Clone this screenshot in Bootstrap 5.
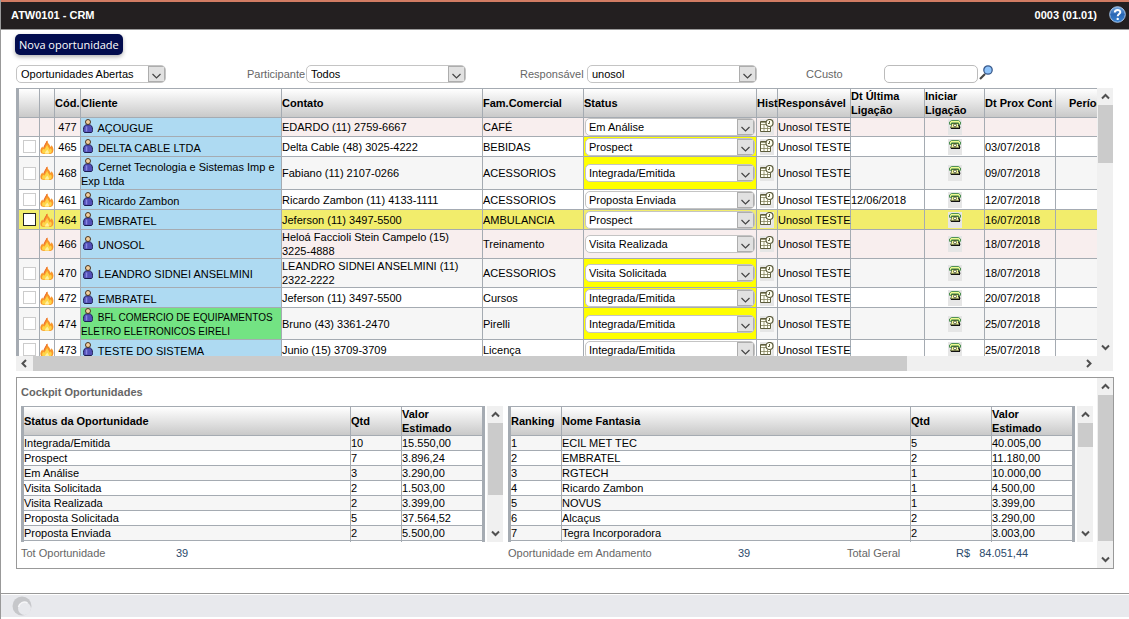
<!DOCTYPE html>
<html lang="pt-BR">
<head>
<meta charset="utf-8">
<meta name="viewport" content="width=device-width, initial-scale=1">
<title>ATW0101 - CRM</title>
<link href="https://cdn.jsdelivr.net/npm/bootstrap@5.3.0/dist/css/bootstrap.min.css" rel="stylesheet">
<style>
:root { --line: #a5abb2; --sky: #aedaf2; }
body { font: 11px/14px "Liberation Sans", Arial, sans-serif; color: #000; background: #fff; border-left: 1px solid #999; }
svg { display: block; flex: none; }
.topbar { height: 30px; background: #231f20; border-top: 2px solid #d27c63; border-bottom: 1px solid #999; padding: 0 3px 2px 10px; }
.page-body { padding: 4px 15px 0; }
.btn-new { font: 11px/16px "Open Sans", sans-serif; height: 21px; padding: 2px 4px; margin-left: -1px; color: #fff; background: #020c4e; border: 0; border-radius: 5px; box-shadow: 0 2px 4px rgba(0,0,0,.3); }
.btn-new:hover { color: #fff; background: #111d6b; }
.filters { display: grid; grid-template-columns: 231fr 273fr 286fr 308fr; margin: 10px 0 5px; height: 18px; }
.filters label { color: #666; font-size: 11px; }
.pick { width: 100%; height: 18px; padding: 0 18px 0 4px; font-size: 11px; line-height: 14px; color: #000; border: 1px solid #c4c4c4; border-radius: 5px;
  background: #fff url("data:image/svg+xml,%3Csvg xmlns='http://www.w3.org/2000/svg' width='17' height='16'%3E%3Crect x='.5' y='.5' width='16' height='15' fill='%23e1e1e1' stroke='%23adadad'/%3E%3Cpath d='M4.500 8l4 4 4-4' fill='none' stroke='%23444' stroke-width='1.200'/%3E%3C/svg%3E") no-repeat right 0 top 0; }
.w-status { width: 150px; }
.w-part { width: 160px; }
.w-resp { width: 170px; }
.lb-a { width: 59px; }
.lb-b { width: 67px; }
.lb-c { width: 78px; }
.w-cc { width: 94px; height: 18px; min-height: 0; padding: 0 4px; font-size: 11px; border: 1px solid #bbb; border-radius: 5px; }

/* data grids */
.grid-table { table-layout: fixed; border-collapse: separate; border-spacing: 0; border-top: 1px solid var(--line); border-left: 3px solid var(--line); }
.grid-table th { height: 29px; padding: 0; background: linear-gradient(#fff, #c9c9c9); font-weight: 700; white-space: nowrap; }
.grid-table th.two-line { white-space: normal; }
.grid-table th, .grid-table td { border-right: 1px solid var(--line); border-bottom: 1px solid var(--line); vertical-align: middle; }
.grid-table td { padding: 0; }
.crm { width: 1108px; }
.crm .c-client { background: var(--sky); }
.crm .c-client.won { background: #73e383; font-size: 10px; }
.crm .c-client svg { display: inline-block; vertical-align: -1px; margin: 0 2px; }
.crm .due { background: #ff0; }
.crm td.c-status { padding: 0 1px; }
.c-status .pick { padding-left: 3px; }
.row-odd { background: #f6f6f6; }
.row-late { background: #f8eeee; }
.row-picked { background: #f2ed6c; }
.row-19 { height: 19px; } .row-20 { height: 20px; } .row-29 { height: 29px; } .row-32 { height: 32px; } .row-33 { height: 33px; }
.tick { appearance: none; display: block; width: 13px; height: 13px; margin: 0 0 0 4px; background: #fff; border: 1px solid #ccc; }
.row-picked .tick { border-color: #222; }
.icon-btn { display: block; margin: 0 auto; padding: 0; border: 0; background: #e6e6e6; width: 14px; height: 16px; }
.grid-view { overflow: hidden; min-width: 0; }
.main-view { height: 268px; }
.main-grid { margin-right: 1px; }

/* scroll bars */
.sbar-v { width: 16px; flex: none; background: #f0f0f0; display: flex; flex-direction: column; align-items: center; }
.sbar-h { height: 15px; background: #f0f0f0; display: flex; align-items: center; padding-right: 16px; }
.arrow { flex: none; width: 17px; height: 17px; padding: 4px; }
.sbar-h .arrow { height: 15px; padding: 3px 4px; }
.arrow path { fill: none; stroke: #505050; stroke-width: 2; }
.knob { background: #cbcbcb; width: 15px; }
.sbar-h .knob { height: 15px; width: 83.5%; }
.knob-a { height: 58px; } .knob-b { height: 72px; } .knob-c { height: 24px; } .knob-d { height: 146px; }

.cockpit { border: 1px solid #999; margin-top: 6px; height: 192px; }
.cockpit h2 { font-size: 11px; line-height: 14px; font-weight: 700; color: #666; margin: 7px 0; }
.cockpit-in { padding: 0 4px; }
.halves { display: grid; grid-template-columns: 482fr 585fr; column-gap: 5px; }
.halves > * { min-width: 0; }
.mini { width: 100%; border-right: 2px solid var(--line); }
.mini td { height: 15px; line-height: 14px; }
.mini tbody tr:nth-child(odd) { background: #f6f6f6; }
.mini-view { height: 136px; flex: 1; margin-right: 2px; }
.totals { color: #666; margin-top: 4px; }
.tot-a { display: grid; grid-template-columns: 155fr 327fr; }
.tot-b { display: grid; grid-template-columns: 230fr 109fr 109fr 137fr; }
.totals output { color: #2b4a6b; }
.statusbar { border-top: 1px solid #999; margin-bottom: 2px; height: 24px; background: #e8e9ed; padding-left: 11px; box-shadow: inset 0 1px #fff; }
</style>
</head>
<body class="d-flex flex-column min-vh-100 overflow-hidden">

<svg width="0" height="0" class="position-absolute" aria-hidden="true">
  <symbol id="i-person" viewBox="0 0 10 14">
    <path d="M1.500 13.500C.5 13 .5 12 .5 10.500 .5 7.500 1.800 6 3.500 5.800h3C8.200 6 9.500 7.500 9.500 10.500c0 1.500 0 2.500-1 3z" fill="#5350b8" stroke="#1c1c50"/>
    <path d="M3.500 7.500v5" stroke="#8a88e0" stroke-width="1.500"/>
    <circle cx="5" cy="3" r="2.500" fill="#f3cf9d" stroke="#4a3520"/>
  </symbol>
  <symbol id="i-fire" viewBox="0 0 14 14">
    <path d="M1 13C-.5 10 1 8 2.500 6.500L3 8C4.500 6 5 3 7.500.3 7.300 2 8.500 3.500 9.300 4.500c.6.900 1 1.500 1.200 2.500.8-.5 1-1.200.8-2C13 6.500 14.500 10 12.500 13c-1 1-3 1-5 1s-5 .2-6.500-1z" fill="#f9962a"/>
    <path d="M2.500 13c-.8-1.500-.5-3 .8-4.200l.9 1C5.800 8 6 6.500 7.200 4.800 7.600 7 9.500 8 9.600 9.800c.6-.3 1-.9 1-1.500 1.500 1.500 1.600 3.500.3 4.700-2 1-6.300 1-8.400 0z" fill="#fed548"/>
    <path d="M5 13.500c0-2 1.500-2.500 2.200-4C8.200 11 9 11.500 9 13.500z" fill="#fff0a0"/>
    <path d="M7 1C6.500 3.500 4.500 5 4 7.500" fill="none" stroke="#ea6a35"/>
  </symbol>
  <symbol id="i-hist" viewBox="0 0 14 16">
    <path d="M.5 2.500h11v10H.5z" fill="#fffff4"/>
    <path d="M7 2.500H.5v10h10V8" fill="none" stroke="#5c5c3c"/>
    <path d="M1 3.500h5M1 5.500h5M1 9.500h9M4 5v7M7.500 8v4" fill="none" stroke="#84845e" stroke-width=".8"/>
    <circle cx="9.500" cy="4" r="3.500" fill="#fffff0" stroke="#5c5c3c" stroke-width="1.200"/>
    <path d="M9.500 2v2.500H8" fill="none" stroke="#5c5c3c"/>
  </symbol>
  <symbol id="i-phone" viewBox="0 0 14 16">
    <path d="M3.500 4.500v2l-1 2.500h9.200l-1.200-3V4.500z" fill="#f7f79c" stroke="#3c4c24" stroke-width=".8"/>
    <path d="M3 9.300h9M12 8.800l-1.300-3" stroke="#111" stroke-width="1.200"/>
    <path d="M1.500 5.300V3l2-1.500h7L12.500 3v2.300h-2V3.900h-7v1.400z" fill="#f1fa92" stroke="#2a7a3c" stroke-width=".8"/>
    <circle cx="7" cy="6.400" r="1.500" fill="#fffef0" stroke="#33401c" stroke-width=".8"/>
  </symbol>
</svg>

<header class="topbar d-flex align-items-center fw-bold text-white">
  <span>ATW0101 - CRM</span>
  <span class="ms-auto me-2">0003 (01.01)</span>
  <a href="#" class="ms-1" aria-label="Ajuda"><svg width="17" height="17" viewBox="0 0 17 17">
    <defs><linearGradient id="hg" x2="0" y2="1"><stop stop-color="#77a9e0"/><stop offset=".5" stop-color="#2a67b4"/><stop offset="1" stop-color="#3c86d4"/></linearGradient></defs>
    <circle cx="8.500" cy="8.500" r="7.800" fill="url(#hg)" stroke="#a9c5e8" stroke-width="1"/>
    <path d="M5.800 6.500C5.800 3 11.500 3.200 11.300 6.300 11.200 8 8.700 8.200 8.700 10.300" fill="none" stroke="#fff" stroke-width="2"/><circle cx="8.700" cy="12.900" r="1.200" fill="#fff"/></svg></a>
</header>

<main class="page-body">
  <button type="button" class="btn btn-new d-block">Nova oportunidade</button>

  <form class="filters">
    <div><select class="form-select pick w-status" aria-label="Oportunidades"><option>Oportunidades Abertas</option></select></div>
    <div class="d-flex align-items-center"><label class="lb-a" for="part">Participante</label><select id="part" class="form-select pick w-part"><option>Todos</option></select></div>
    <div class="d-flex align-items-center"><label class="lb-b" for="resp">Responsável</label><select id="resp" class="form-select pick w-resp"><option>unosol</option></select></div>
    <div class="d-flex align-items-center"><label class="lb-c" for="cc">CCusto</label><input id="cc" type="text" class="form-control w-cc">
      <a href="#" aria-label="Buscar"><svg width="16" height="18" viewBox="0 0 16 18"><path d="M2 14l5-5" stroke="#444" stroke-width="2.200"/><circle cx="10" cy="5" r="4.200" fill="#8fc4fb" stroke="#3a5a8c" stroke-width="1.300"/></svg></a></div>
  </form>

  <section class="main-grid">
    <div class="d-flex">
      <div class="grid-view main-view flex-fill">
        <table class="grid-table crm">
          <colgroup id="crmCols"></colgroup>
          <thead><tr>
            <th></th><th></th><th>Cód.</th><th>Cliente</th><th>Contato</th><th>Fam.Comercial</th><th>Status</th><th>Hist</th><th>Responsável</th>
            <th class="two-line">Dt Última Ligação</th><th class="two-line">Iniciar Ligação</th><th>Dt Prox Cont</th><th class="text-center">Período</th>
          </tr></thead>
          <tbody id="crmRows"></tbody>
        </table>
      </div>
      <div class="sbar-v"><svg class="arrow" viewBox="0 0 9 9"><path d="M1 6.500L4.500 3 8 6.500"/></svg><div class="knob knob-a"></div><svg class="arrow mt-auto" viewBox="0 0 9 9"><path d="M1 2.500L4.500 6 8 2.500"/></svg></div>
    </div>
    <div class="sbar-h"><svg class="arrow" viewBox="0 0 9 9"><path d="M6 1L2.500 4.500 6 8"/></svg><div class="flex-fill"><div class="knob"></div></div><svg class="arrow" viewBox="0 0 9 9"><path d="M3 1l3.500 3.500L3 8"/></svg></div>
  </section>

  <section class="cockpit d-flex">
    <div class="cockpit-in flex-fill">
      <h2>Cockpit Oportunidades</h2>
      <div class="halves">
        <div class="d-flex">
          <div class="grid-view mini-view">
            <table class="grid-table mini">
              <colgroup><col><col width="51"><col width="81"></colgroup>
              <thead><tr><th>Status da Oportunidade</th><th>Qtd</th><th>Valor<br>Estimado</th></tr></thead>
              <tbody id="statusRows"></tbody>
            </table>
          </div>
          <div class="sbar-v"><svg class="arrow" viewBox="0 0 9 9"><path d="M1 6.500L4.500 3 8 6.500"/></svg><div class="knob knob-b"></div><svg class="arrow mt-auto" viewBox="0 0 9 9"><path d="M1 2.500L4.500 6 8 2.500"/></svg></div>
        </div>
        <div class="d-flex">
          <div class="grid-view mini-view">
            <table class="grid-table mini">
              <colgroup><col width="51"><col><col width="81"><col width="81"></colgroup>
              <thead><tr><th>Ranking</th><th>Nome Fantasia</th><th>Qtd</th><th>Valor<br>Estimado</th></tr></thead>
              <tbody id="rankRows"></tbody>
            </table>
          </div>
          <div class="sbar-v"><svg class="arrow" viewBox="0 0 9 9"><path d="M1 6.500L4.500 3 8 6.500"/></svg><div class="knob knob-c"></div><svg class="arrow mt-auto" viewBox="0 0 9 9"><path d="M1 2.500L4.500 6 8 2.500"/></svg></div>
        </div>
      </div>
      <div class="halves totals">
        <div class="tot-a"><span>Tot Oportunidade</span><output>39</output></div>
        <div class="tot-b"><span>Oportunidade em Andamento</span><output>39</output><span>Total Geral</span><output>R$&nbsp;&nbsp; 84.051,44</output></div>
      </div>
    </div>
    <div class="sbar-v"><svg class="arrow" viewBox="0 0 9 9"><path d="M1 6.500L4.500 3 8 6.500"/></svg><div class="knob knob-d"></div><svg class="arrow mt-auto" viewBox="0 0 9 9"><path d="M1 2.500L4.500 6 8 2.500"/></svg></div>
  </section>
</main>

<footer class="statusbar mt-auto d-flex align-items-center">
  <svg width="20" height="20" viewBox="0 0 20 20"><circle cx="10" cy="10" r="9.500" fill="#c6c7ca"/><circle cx="12.500" cy="12.500" r="6.500" fill="#e8e9ed"/><path d="M6.500 11a6 6 0 0 1 9-4" fill="none" stroke="#f6f6f8" stroke-width="1.500"/></svg>
</footer>

<script src="https://cdn.jsdelivr.net/npm/bootstrap@5.3.0/dist/js/bootstrap.bundle.min.js"></script>
<script>
const colWidths = [21, 15, 26, 201, 201, 101, 173, 21, 73, 74, 60, 71, 68];
document.getElementById('crmCols').innerHTML = colWidths.map(w => `<col width="${w}">`).join('');

// code, client, contact, phone, family, status, last call, next contact, row classes, flags (t tick, f fire, d due, w won)
const deals = [
  [477, 'AÇOUGUE', 'EDARDO (11)', '2759-6667', 'CAFÉ', 'Em Análise', '', '', 'row-19 row-late', ''],
  [465, 'DELTA CABLE LTDA', 'Delta Cable (48)', '3025-4222', 'BEBIDAS', 'Prospect', '', '03/07/2018', 'row-20', 'tfd'],
  [468, 'Cernet Tecnologia e Sistemas Imp e Exp Ltda', 'Fabiano (11)', '2107-0266', 'ACESSORIOS', 'Integrada/Emitida', '', '09/07/2018', 'row-33 row-odd', 'tfd'],
  [461, 'Ricardo Zambon', 'Ricardo Zambon (11)', '4133-1111', 'ACESSORIOS', 'Proposta Enviada', '12/06/2018', '12/07/2018', 'row-20', 'tf'],
  [464, 'EMBRATEL', 'Jeferson (11)', '3497-5500', 'AMBULANCIA', 'Prospect', '', '16/07/2018', 'row-20 row-picked', 'tf'],
  [466, 'UNOSOL', 'Heloá Faccioli Stein Campelo (15)', '3225-4888', 'Treinamento', 'Visita Realizada', '', '18/07/2018', 'row-29 row-late', 'f'],
  [470, 'LEANDRO SIDNEI ANSELMINI', 'LEANDRO SIDNEI ANSELMINI (11)', '2322-2222', 'ACESSORIOS', 'Visita Solicitada', '', '18/07/2018', 'row-29 row-odd', 'tfd'],
  [472, 'EMBRATEL', 'Jeferson (11)', '3497-5500', 'Cursos', 'Integrada/Emitida', '', '20/07/2018', 'row-20', 'tfd'],
  [474, 'BFL COMERCIO DE EQUIPAMENTOS ELETRO ELETRONICOS EIRELI', 'Bruno (43)', '3361-2470', 'Pirelli', 'Integrada/Emitida', '', '25/07/2018', 'row-32 row-odd', 'tfdw'],
  [473, 'TESTE DO SISTEMA', 'Junio (15)', '3709-3709', 'Licença', 'Integrada/Emitida', '', '25/07/2018', 'row-20', 'tf']
];
const icon = (id, w, h) => `<svg width="${w}" height="${h}" aria-hidden="true"><use href="#i-${id}"/></svg>`;
document.getElementById('crmRows').innerHTML = deals.map(([code, client, contact, phone, family, status, last, next, cls, flags]) => `
  <tr class="${cls}">
    <td>${flags.includes('t') ? `<input type="checkbox" class="tick" aria-label="${code}">` : ''}</td>
    <td>${flags.includes('f') ? icon('fire', 14, 14) : ''}</td>
    <td class="text-center">${code}</td>
    <td class="c-client ${flags.includes('w') ? 'won' : ''}">${icon('person', 10, 14)} ${client}</td>
    <td>${contact} <span class="text-nowrap">${phone}</span></td>
    <td>${family}</td>
    <td class="c-status ${flags.includes('d') ? 'due' : ''}"><select class="form-select pick" aria-label="Status ${code}"><option>${status}</option></select></td>
    <td><button type="button" class="icon-btn" aria-label="Hist">${icon('hist', 14, 16)}</button></td>
    <td class="text-nowrap">Unosol TESTE</td>
    <td>${last}</td>
    <td><button type="button" class="icon-btn" aria-label="Iniciar Ligação">${icon('phone', 14, 16)}</button></td>
    <td>${next}</td>
    <td></td>
  </tr>`).join('');

const fill = (id, rows) => document.getElementById(id).innerHTML =
  rows.map(r => '<tr>' + r.map(c => `<td>${c}</td>`).join('') + '</tr>').join('');
fill('statusRows', [
  ['Integrada/Emitida', 10, '15.550,00'], ['Prospect', 7, '3.896,24'], ['Em Análise', 3, '3.290,00'], ['Visita Solicitada', 2, '1.503,00'],
  ['Visita Realizada', 2, '3.399,00'], ['Proposta Solicitada', 5, '37.564,52'], ['Proposta Enviada', 2, '5.500,00'], ['', '', '']
]);
fill('rankRows', [
  [1, 'ECIL MET TEC', 5, '40.005,00'], [2, 'EMBRATEL', 2, '11.180,00'], [3, 'RGTECH', 1, '10.000,00'], [4, 'Ricardo Zambon', 1, '4.500,00'],
  [5, 'NOVUS', 1, '3.399,00'], [6, 'Alcaçus', 2, '3.290,00'], [7, 'Tegra Incorporadora', 2, '3.003,00'], ['', '', '', '']
]);
</script>
</body>
</html>
